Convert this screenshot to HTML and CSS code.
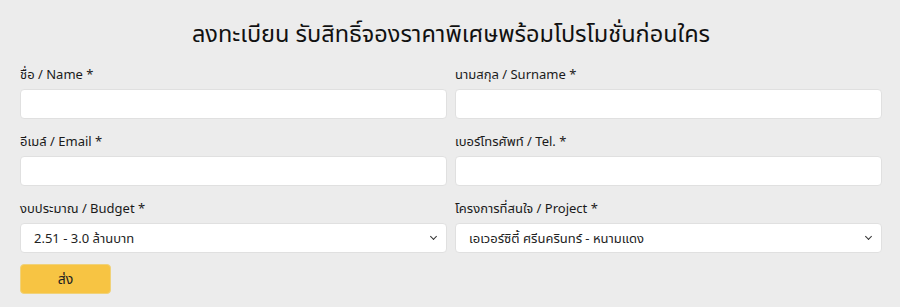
FILE: index.html
```html
<!DOCTYPE html>
<html lang="th">
<head>
    <meta charset="UTF-8">
    <meta name="viewport" content="width=device-width, initial-scale=1.0">
    <title>ลงทะเบียน</title>
    <link rel="stylesheet" href="styles.css">
</head>
<body>
    <section class="register">
        <h2 class="register-title">ลงทะเบียน รับสิทธิ์จองราคาพิเศษพร้อมโปรโมชั่นก่อนใคร</h2>
        <form class="register-form" onsubmit="return false">
            <div class="field">
                <label for="name">ชื่อ / Name *</label>
                <input type="text" id="name" class="control">
            </div>
            <div class="field">
                <label for="surname">นามสกุล / Surname *</label>
                <input type="text" id="surname" class="control">
            </div>
            <div class="field">
                <label for="email">อีเมล์ / Email *</label>
                <input type="email" id="email" class="control">
            </div>
            <div class="field">
                <label for="tel">เบอร์โทรศัพท์ / Tel. *</label>
                <input type="tel" id="tel" class="control">
            </div>
            <div class="field">
                <label for="budget">งบประมาณ / Budget *</label>
                <div class="select-wrap">
                    <select id="budget" class="control">
                        <option>2.51 - 3.0 ล้านบาท</option>
                    </select>
                </div>
            </div>
            <div class="field">
                <label for="project">โครงการที่สนใจ / Project *</label>
                <div class="select-wrap">
                    <select id="project" class="control">
                        <option>เอเวอร์ซิตี้ ศรีนครินทร์ - หนามแดง</option>
                    </select>
                </div>
            </div>
            <div class="actions">
                <button type="submit" class="btn-send">ส่ง</button>
            </div>
        </form>
    </section>
</body>
</html>
```
FILE: styles.css
```css
body {
    margin: 0;
    background-color: #ececec;
    font-family: "Noto Sans", "Noto Sans Thai", sans-serif;
    color: #222;
}

.register {
    width: 862px;
    margin: 0 18px 0 20px;
    padding-top: 16px;
}

.register-title {
    margin: 0 0 14px;
    text-align: center;
    font-size: 23.5px;
    font-weight: 400;
    line-height: 34px;
    color: #111;
}

.register-form {
    display: grid;
    grid-template-columns: 1fr 1fr;
    column-gap: 8px;
    row-gap: 12px;
}

.field label {
    display: block;
    font-size: 13px;
    font-weight: 400;
    line-height: 20px;
    margin-bottom: 5px;
    color: #1a1a1a;
}

.control {
    display: block;
    box-sizing: border-box;
    width: 100%;
    height: 30px;
    padding: 0 13px;
    border: 1px solid #e0e0e0;
    border-radius: 4px;
    background-color: #fff;
    font-family: inherit;
    font-size: 13px;
    color: #222;
    outline: none;
}

.select-wrap {
    position: relative;
}

select.control {
    appearance: none;
    -webkit-appearance: none;
}

.select-wrap::after {
    content: "";
    position: absolute;
    right: 11px;
    top: 11px;
    width: 4px;
    height: 4px;
    border-right: 1.5px solid #333;
    border-bottom: 1.5px solid #333;
    transform: rotate(45deg);
    pointer-events: none;
}

.actions {
    grid-column: 1 / -1;
    margin-top: -1px;
}

.btn-send {
    width: 91px;
    height: 30px;
    border: 1px solid #f0d27a;
    border-radius: 4px;
    background-color: #f7c443;
    font-family: inherit;
    font-size: 14px;
    color: #222;
    cursor: pointer;
}
```
